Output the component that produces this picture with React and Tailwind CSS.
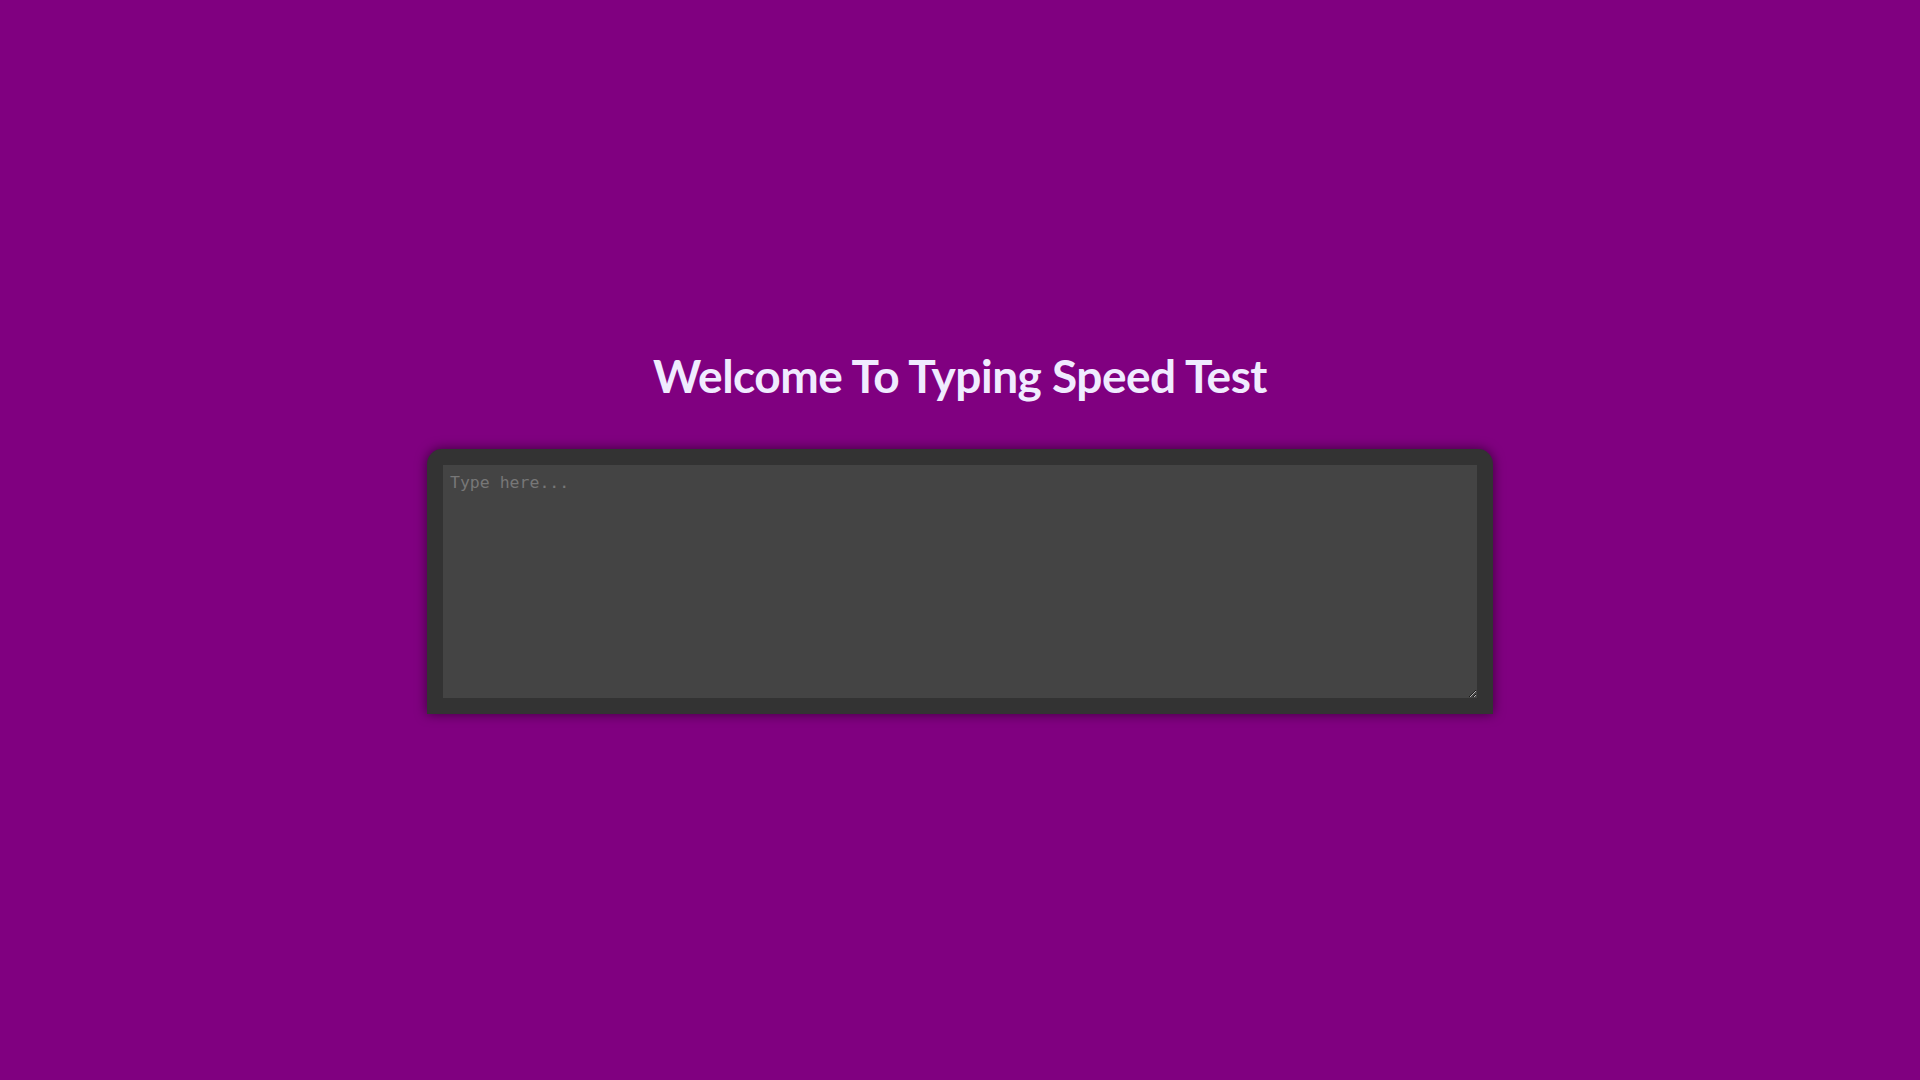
export default function App() {
  return (
    <div className="min-h-screen w-full bg-[#800080] pt-[340px] flex flex-col items-center">
      <h1 className="font-['Lato',sans-serif] font-bold text-[46px] leading-[72px] tracking-[-0.5px] text-[#f0ebff]">
        Welcome To Typing Speed Test
      </h1>
      <div className="mt-[37px] w-[1066px] rounded-t-[15px] bg-[#333333] p-4 shadow-[0_0_12px_rgba(0,0,0,0.55)]">
        <textarea
          className="block h-[233px] w-full bg-[#444444] px-[7px] py-[6px] font-['DejaVu_Sans_Mono',monospace] text-[16.5px] text-[#dddddd] outline-none placeholder:text-[#777777]"
          placeholder="Type here..."
        />
      </div>
    </div>
  );
}
